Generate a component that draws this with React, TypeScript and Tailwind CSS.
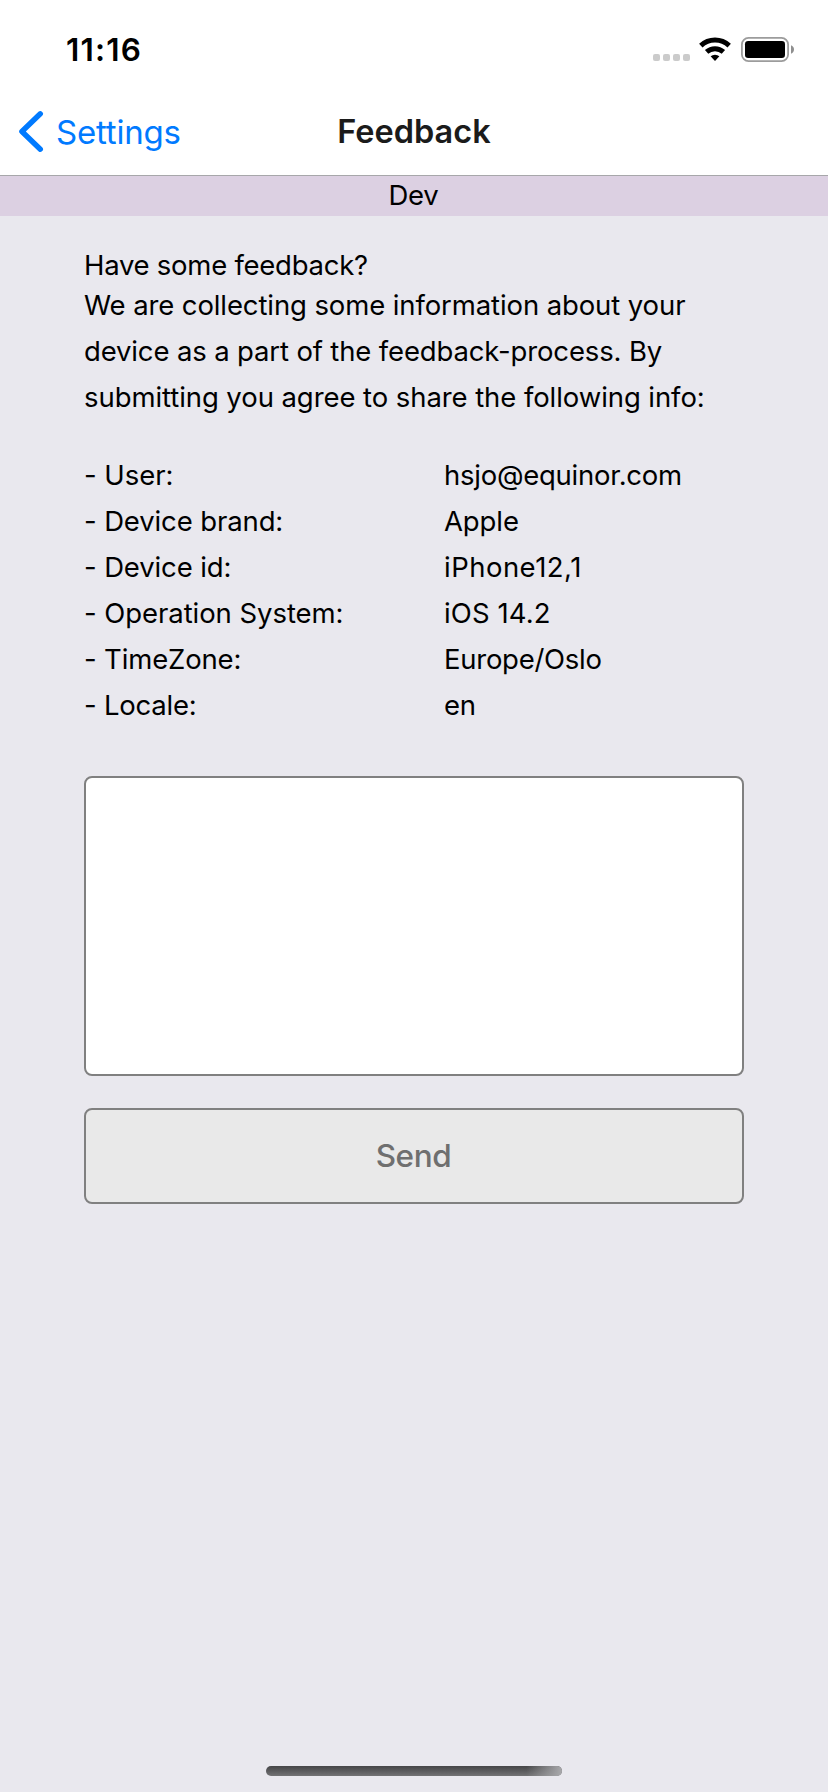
type Row = {
  label: string;
  value: string;
  labelTracking: string;
  valueTracking: string;
};

const rows: Row[] = [
  { label: "- User:", value: "hsjo@equinor.com", labelTracking: "tracking-[-0.05px]", valueTracking: "tracking-[-0.25px]" },
  { label: "- Device brand:", value: "Apple", labelTracking: "tracking-[-0.12px]", valueTracking: "tracking-[-0.1px]" },
  { label: "- Device id:", value: "iPhone12,1", labelTracking: "tracking-[-0.12px]", valueTracking: "tracking-[0.48px]" },
  { label: "- Operation System:", value: "iOS 14.2", labelTracking: "tracking-[-0.06px]", valueTracking: "tracking-[0.1px]" },
  { label: "- TimeZone:", value: "Europe/Oslo", labelTracking: "tracking-[-0.15px]", valueTracking: "tracking-[-0.27px]" },
  { label: "- Locale:", value: "en", labelTracking: "tracking-[-0.22px]", valueTracking: "tracking-[-0.3px]" },
];

function SignalDots() {
  return (
    <div className="mb-px flex gap-[3px]">
      <span className="size-[7px] rounded-[2px] bg-[#cbcbcb]" />
      <span className="size-[7px] rounded-[2px] bg-[#cbcbcb]" />
      <span className="size-[7px] rounded-[2px] bg-[#cbcbcb]" />
      <span className="size-[7px] rounded-[2px] bg-[#cbcbcb]" />
    </div>
  );
}

function WifiIcon() {
  return (
    <svg className="ml-[9px] h-[25px] w-8" viewBox="0 0 32 25" fill="none" stroke="black" strokeWidth="5">
      <path d="M1.8 8.6A21 21 0 0 1 30.2 8.6" />
      <path d="M7.6 14.9A12.5 12.5 0 0 1 24.4 14.9" />
      <path d="M16 24L11.6 19.3A6.7 6.7 0 0 1 20.4 19.3Z" fill="black" stroke="none" />
    </svg>
  );
}

function BatteryIcon() {
  return (
    <svg className="ml-[10px] h-[25px] w-[53px]" viewBox="0 0 53 25" fill="none">
      <rect x="0.9" y="0.9" width="46.2" height="23.2" rx="6.6" stroke="#9c9c9c" strokeWidth="1.8" />
      <rect x="4" y="4" width="40" height="17" rx="3.2" fill="black" />
      <path d="M50 8.3Q53 9.6 53 12.5Q53 15.4 50 16.7Z" fill="#8f8f8f" />
    </svg>
  );
}

function StatusBar() {
  return (
    <div className="flex h-[88px] items-start justify-between pr-[34px] pl-[66px]">
      <span className="mt-[30px] text-[31.5px] leading-[39px] font-semibold tracking-[1.2px]">11:16</span>
      <div className="mt-[37px] flex items-end">
        <SignalDots />
        <WifiIcon />
        <BatteryIcon />
      </div>
    </div>
  );
}

function NavBar() {
  return (
    <nav className="grid h-[88px] grid-cols-[1fr_auto_1fr] items-start border-b border-[#a7a7aa] pt-6">
      <button className="flex items-start text-left text-[#007aff]">
        <svg className="-mt-[2px] ml-[18px] h-[44px] w-7" viewBox="0 0 28 44" fill="none" stroke="currentColor" strokeWidth="5.4" strokeLinecap="round" strokeLinejoin="round">
          <path d="M22.3 3.8L3.9 21.5L22.3 39.2" />
        </svg>
        <span className="ml-[10px] text-[33px] leading-10 tracking-[-0.2px]">Settings</span>
      </button>
      <h1 className="text-[32.5px] leading-[39px] font-semibold text-[#1b1b1b]">Feedback</h1>
    </nav>
  );
}

export default function App() {
  return (
    <div className="flex h-[1792px] w-[828px] flex-col bg-[#e9e8ee] font-['Inter','Liberation_Sans',sans-serif] text-black">
      <header className="bg-white">
        <StatusBar />
        <NavBar />
      </header>
      <div className="h-10 bg-[#dcd0e2] pr-px text-center text-[27.5px] leading-[38px] tracking-[-0.2px]">Dev</div>

      <main className="flex grow flex-col px-[84px] pt-8 text-[27.5px]">
        <p className="leading-[34px] tracking-[-0.26px]">Have some feedback?</p>
        <p className="leading-[46px] whitespace-nowrap">
          <span className="block tracking-[-0.107px]">We are collecting some information about your</span>
          <span className="block tracking-[-0.145px]">device as a part of the feedback-process. By</span>
          <span className="block tracking-[-0.075px]">submitting you agree to share the following info:</span>
        </p>

        <dl className="mt-8 leading-[46px]">
          {rows.map((row) => (
            <div key={row.label} className="grid grid-cols-[360px_1fr]">
              <dt className={row.labelTracking}>{row.label}</dt>
              <dd className={row.valueTracking}>{row.value}</dd>
            </div>
          ))}
        </dl>

        <textarea className="mt-12 block h-[300px] w-full resize-none rounded-lg border-2 border-[#808080] bg-white p-4 outline-none" />
        <button className="mt-8 h-24 w-full rounded-lg border-2 border-[#808080] bg-[#e9e9e9] pr-px pb-0.5 text-[31.5px] leading-[39px] font-medium tracking-[-0.4px] text-[#6f6f6f]">
          Send
        </button>
      </main>

      <footer className="flex justify-center pb-4">
        <div className="h-[10px] w-[296px] rounded-full bg-linear-to-b from-[#454547] to-[#727274]">
          <div className="h-full rounded-full bg-linear-to-r from-transparent from-88% to-[#a9a9ac]" />
        </div>
      </footer>
    </div>
  );
}
